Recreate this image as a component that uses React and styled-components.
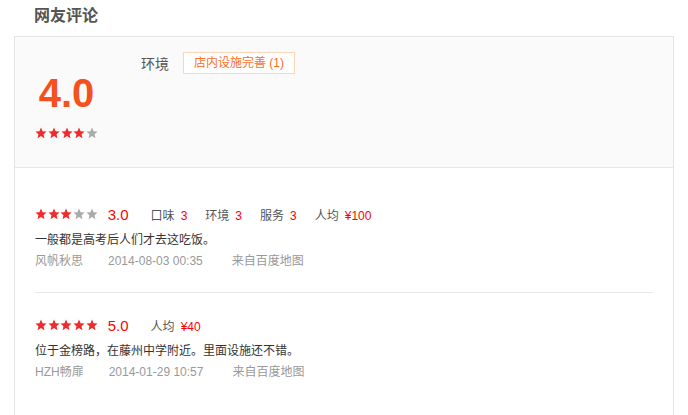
import React from 'react';
import styled, { createGlobalStyle } from 'styled-components';

const GlobalStyle = createGlobalStyle`
    body {
        margin: 0;
        background: #fff;
        font-family: "Liberation Sans", "Noto Sans CJK SC", sans-serif;
    }
`;

const Page = styled.div`
    width: 688px;
    height: 415px;
    overflow: hidden;
`;

const Title = styled.h2`
    margin: 0;
    height: 36px;
    line-height: 32px;
    padding-left: 34px;
    font-size: 16px;
    font-weight: bold;
    color: #555;
`;

const Box = styled.div`
    margin: 0 14px;
    border: 1px solid #e5e5e5;
    height: 420px;
`;

const Summary = styled.div`
    display: flex;
    height: 130px;
    padding-left: 20px;
    background: #fafafa;
    border-bottom: 1px solid #e8e8e8;
`;

const ScoreCol = styled.div`
    width: 63px;
    padding-top: 34px;
    display: flex;
    flex-direction: column;
    align-items: center;
`;

const BigScore = styled.div`
    font-size: 40px;
    line-height: 44px;
    font-weight: bold;
    color: #f4511e;
`;

const StarRow = styled.div`
    display: flex;
    gap: 0.7px;
    margin-top: ${p => p.$top || 0}px;
`;

const TagsCol = styled.div`
    margin-left: 43px;
    padding-top: 15px;
    display: flex;
    align-items: center;
    height: 22px;
`;

const TagLabel = styled.span`
    font-size: 14px;
    color: #555;
    margin-right: 14px;
`;

const Tag = styled.span`
    border: 1px solid #fdd5b8;
    padding: 0 10px;
    line-height: 20px;
    font-size: 12px;
    color: #ff6d1f;
    background: #fff;
`;

const List = styled.div`
    padding: 14px 20px 0;
`;

const Review = styled.div`
    padding: 20px 0;
    border-bottom: ${p => (p.$last ? 'none' : '1px solid #e8e8e8')};
`;

const ScoreRow = styled.div`
    display: flex;
    align-items: center;
    height: 24px;
    margin-bottom: 4px;
`;

const SmallScore = styled.span`
    font-size: 15px;
    color: #f00;
    margin: 0 22px 0 10px;
`;

const Item = styled.span`
    font-size: 12px;
    color: #555;
    margin-right: 18px;
`;

const Value = styled.span`
    color: #f00;
    margin-left: 6px;
`;

const Comment = styled.div`
    font-size: 12px;
    line-height: 20px;
    color: #333;
`;

const Meta = styled.div`
    display: flex;
    font-size: 12px;
    line-height: 22px;
    color: #999;
`;

const MetaItem = styled.span`
    margin-right: ${p => p.$gap || 25}px;
`;

function Star({ on }) {
    return (
        <svg width="12" height="12" viewBox="0 0 24 24">
            <path
                d="M12 1.2l3.2 7.3 7.9.7-6 5.3 1.8 7.8L12 18.2l-6.9 4.1 1.8-7.8-6-5.3 7.9-.7z"
                fill={on ? '#ef2b2b' : '#aaaaaa'}
            />
        </svg>
    );
}

function Stars({ value, top }) {
    return (
        <StarRow $top={top}>
            {[1, 2, 3, 4, 5].map(i => (
                <Star key={i} on={i <= value} />
            ))}
        </StarRow>
    );
}

const reviews = [
    {
        stars: 3,
        score: '3.0',
        items: [['口味', '3'], ['环境', '3'], ['服务', '3'], ['人均', '¥100']],
        text: '一般都是高考后人们才去这吃饭。',
        user: '风帆秋思',
        date: '2014-08-03 00:35',
        from: '来自百度地图',
    },
    {
        stars: 5,
        score: '5.0',
        items: [['人均', '¥40']],
        text: '位于金榜路，在藤州中学附近。里面设施还不错。',
        user: 'HZH畅扉',
        date: '2014-01-29 10:57',
        from: '来自百度地图',
    },
];

function App() {
    return (
        <Page>
            <GlobalStyle />
            <Title>网友评论</Title>
            <Box>
                <Summary>
                    <ScoreCol>
                        <BigScore>4.0</BigScore>
                        <Stars value={4} top={12} />
                    </ScoreCol>
                    <TagsCol>
                        <TagLabel>环境</TagLabel>
                        <Tag>店内设施完善 (1)</Tag>
                    </TagsCol>
                </Summary>
                <List>
                    {reviews.map((r, i) => (
                        <Review key={i} $last={i === reviews.length - 1}>
                            <ScoreRow>
                                <Stars value={r.stars} />
                                <SmallScore>{r.score}</SmallScore>
                                {r.items.map(([k, v]) => (
                                    <Item key={k}>
                                        {k}
                                        <Value>{v}</Value>
                                    </Item>
                                ))}
                            </ScoreRow>
                            <Comment>{r.text}</Comment>
                            <Meta>
                                <MetaItem>{r.user}</MetaItem>
                                <MetaItem $gap={29}>{r.date}</MetaItem>
                                <MetaItem>{r.from}</MetaItem>
                            </Meta>
                        </Review>
                    ))}
                </List>
            </Box>
        </Page>
    );
}

export default App;
